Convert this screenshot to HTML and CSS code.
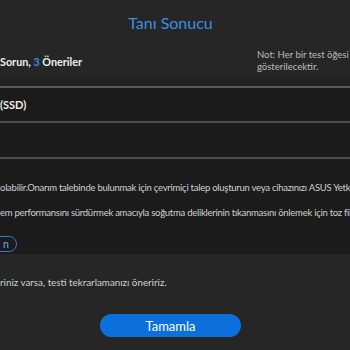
FILE: index.html
```html
<!DOCTYPE html>
<html lang="tr">
<head>
<meta charset="utf-8">
<link rel="stylesheet" href="styles.css">
</head>
<body>
<div class="dialog">
  <div class="title">Tanı Sonucu</div>
  <div class="summary">
    <div class="count">Sorun, <span class="num">3</span> Öneriler</div>
    <div class="note">Not: Her bir test öğesi için<br>gösterilecektir.</div>
  </div>
  <div class="band"></div>
  <div class="panel">
    <div class="row">(SSD)</div>
    <div class="row empty"></div>
    <div class="advice">
      <p>olabilir.Onarım talebinde bulunmak için çevrimiçi talep oluşturun veya cihazınızı ASUS Yetkili Servis</p>
      <p>em performansını sürdürmek amacıyla soğutma deliklerinin tıkanmasını önlemek için toz filtresi</p>
      <span class="pill">n</span>
    </div>
  </div>
  <div class="footer">
    <p class="retry">riniz varsa, testi tekrarlamanızı öneririz.</p>
    <button class="done">Tamamla</button>
  </div>
</div>
</body>
</html>
```

FILE: styles.css
```css
html, body {
  margin: 0;
  padding: 0;
  background: #262626;
  overflow: hidden;
}
body {
  width: 350px;
  height: 350px;
  font-family: Lato, "Noto Sans", sans-serif;
  color: #e6e6e6;
}
.dialog {
  width: 350px;
  height: 350px;
  overflow: hidden;
}
.title {
  width: 341px;
  height: 46px;
  line-height: 46px;
  text-align: center;
  font-size: 16px;
  color: #3a8fe4;
}
.summary {
  display: flex;
  justify-content: space-between;
  align-items: center;
  height: 31px;
}
.count {
  font-size: 10.8px;
  font-weight: 700;
  color: #eeeeee;
  white-space: nowrap;
}
.num {
  color: #3a8fe4;
}
.note {
  width: 93px;
  font-size: 9.5px;
  line-height: 12px;
  color: #bdbdbd;
  white-space: nowrap;
  overflow: hidden;
  margin-top: -2px;
}
.band {
  height: 9px;
  background: #222222;
}
.panel {
  background: #1b1b1b;
  border-top: 2px solid #5a5a5a;
  height: 166px;
  overflow: hidden;
}
.row {
  height: 33px;
  line-height: 33px;
  font-size: 11px;
  font-weight: 700;
  color: #eeeeee;
  border-bottom: 2px solid #4c4c4c;
}
.row.empty {
  height: 34px;
}
.advice {
  padding-top: 16px;
}
.advice p {
  margin: 0;
  height: 25px;
  line-height: 25px;
  font-size: 9.5px;
  letter-spacing: -0.26px;
  color: #d0d0d0;
  white-space: nowrap;
}
.pill {
  display: inline-block;
  margin-top: 11px;
  margin-left: -30px;
  padding-left: 32px;
  width: 13px;
  height: 14px;
  line-height: 14px;
  border: 1px solid #3a78c8;
  border-radius: 8px;
  font-size: 10.5px;
  color: #6aa8ec;
}
.footer {
  padding-top: 18px;
}
.retry {
  margin: 0;
  font-size: 9.8px;
  line-height: 20px;
  color: #d0d0d0;
  white-space: nowrap;
}
.done {
  display: block;
  margin: 22px 0 0 100px;
  width: 141px;
  height: 23px;
  border: none;
  border-radius: 12px;
  background: #0b6fdc;
  color: #ffffff;
  font-family: Lato, "Noto Sans", sans-serif;
  font-size: 13px;
  padding: 0;
}
```
